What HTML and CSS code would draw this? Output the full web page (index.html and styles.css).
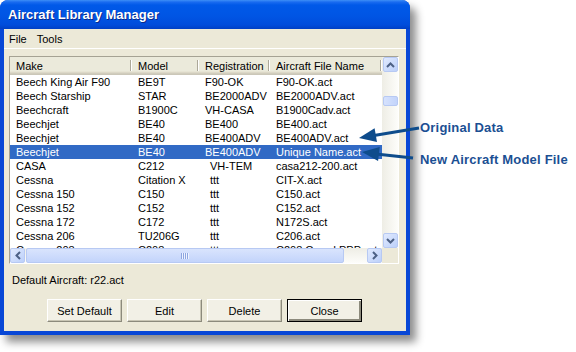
FILE: index.html
```html
<!DOCTYPE html>
<html>
    <head>
        <meta charset="UTF-8">
        <title>Aircraft Library Manager</title>
        <link rel="stylesheet" href="styles.css">
    </head>
    <body>
        <div class="window">
            <div class="titlebar">Aircraft Library Manager</div>
            <div class="client">
                <div class="menubar">
                    <span>File</span>
                    <span>Tools</span>
                </div>
                <div class="listview">
                    <div class="list-area">
                        <table class="aircraft">
                            <colgroup>
                                <col class="c-make">
                                <col class="c-model">
                                <col class="c-reg">
                                <col class="c-file">
                            </colgroup>
                            <thead>
                                <tr><th>Make</th><th>Model</th><th>Registration</th><th>Aircraft File Name</th></tr>
                            </thead>
                            <tbody>
                                <tr><td>Beech King Air F90</td><td>BE9T</td><td>F90-OK</td><td>F90-OK.act</td></tr>
                                <tr><td>Beech Starship</td><td>STAR</td><td>BE2000ADV</td><td>BE2000ADV.act</td></tr>
                                <tr><td>Beechcraft</td><td>B1900C</td><td>VH-CASA</td><td>B1900Cadv.act</td></tr>
                                <tr><td>Beechjet</td><td>BE40</td><td>BE400</td><td>BE400.act</td></tr>
                                <tr><td>Beechjet</td><td>BE40</td><td>BE400ADV</td><td>BE400ADV.act</td></tr>
                                <tr class="sel"><td>Beechjet</td><td>BE40</td><td>BE400ADV</td><td>Unique Name.act</td></tr>
                                <tr><td>CASA</td><td>C212</td><td class="shift">VH-TEM</td><td>casa212-200.act</td></tr>
                                <tr><td>Cessna</td><td>Citation X</td><td class="shift">ttt</td><td>CIT-X.act</td></tr>
                                <tr><td>Cessna 150</td><td>C150</td><td class="shift">ttt</td><td>C150.act</td></tr>
                                <tr><td>Cessna 152</td><td>C152</td><td class="shift">ttt</td><td>C152.act</td></tr>
                                <tr><td>Cessna 172</td><td>C172</td><td class="shift">ttt</td><td>N172S.act</td></tr>
                                <tr><td>Cessna 206</td><td>TU206G</td><td class="shift">ttt</td><td>C206.act</td></tr>
                                <tr><td>Cessna 208</td><td>C208</td><td class="shift">ttt</td><td>C208 Grand PPP.act</td></tr>
                            </tbody>
                        </table>
                    </div>
                    <div class="vscroll">
                        <div class="sbtn">
                            <svg width="9" height="6" viewBox="0 0 9 6"><path d="M1 5 L4.5 1.5 L8 5" fill="none" stroke="#4d6185" stroke-width="2"/></svg>
                        </div>
                        <div class="vthumb"></div>
                        <div class="sbtn push">
                            <svg width="9" height="6" viewBox="0 0 9 6"><path d="M1 1 L4.5 4.5 L8 1" fill="none" stroke="#4d6185" stroke-width="2"/></svg>
                        </div>
                    </div>
                    <div class="hscroll">
                        <div class="sbtn">
                            <svg width="6" height="9" viewBox="0 0 6 9"><path d="M5 1 L1.5 4.5 L5 8" fill="none" stroke="#4d6185" stroke-width="2"/></svg>
                        </div>
                        <div class="hthumb"><span class="grip"></span></div>
                        <div class="sbtn push">
                            <svg width="6" height="9" viewBox="0 0 6 9"><path d="M1 1 L4.5 4.5 L1 8" fill="none" stroke="#4d6185" stroke-width="2"/></svg>
                        </div>
                    </div>
                    <div class="corner"></div>
                </div>
                <div class="status">Default Aircraft: r22.act</div>
                <div class="buttons">
                    <button class="btn">Set Default</button>
                    <button class="btn">Edit</button>
                    <button class="btn">Delete</button>
                    <button class="btn default">Close</button>
                </div>
            </div>
        </div>

        <!-- callout arrows over the dialog -->
        <svg class="arrows" width="576" height="352" viewBox="0 0 576 352">
            <line x1="419" y1="128" x2="374" y2="135.5" stroke="#0e4c8c" stroke-width="3"/>
            <polygon points="359,138 374.6,128.3 377,142.1" fill="#0e4c8c"/>
            <line x1="413" y1="158" x2="376" y2="154" stroke="#0e4c8c" stroke-width="3"/>
            <polygon points="362,152 379.7,147 378.1,161" fill="#0e4c8c"/>
        </svg>
        <div class="note note-orig">Original Data</div>
        <div class="note note-new">New Aircraft Model File</div>
    </body>
</html>
```

FILE: styles.css
```css
body {
    margin: 0;
    width: 576px;
    height: 352px;
    overflow: hidden;
    position: relative;
    background: #fff;
    font-family: "Liberation Sans", Arial, sans-serif;
    font-size: 11px;
    color: #000;
}
.window {
    width: 410px;
    height: 335px;
    display: flex;
    flex-direction: column;
    background: #0847d6;
    border-radius: 8px 8px 0 0;
    box-shadow: 6px 7px 9px rgba(0, 0, 0, 0.45);
}
.titlebar {
    height: 29px;
    flex: none;
    padding-left: 8px;
    line-height: 29px;
    color: #fff;
    font-size: 13px;
    font-weight: bold;
    text-shadow: 1px 1px #0b2a8a;
    border-radius: 8px 8px 0 0;
    background: linear-gradient(to bottom, #3d8ff6 0, #1a6cf0 2px, #0059e8 5px, #0055e4 16px, #004cdb 25px, #003fc4 29px);
}
.client {
    flex: 1;
    margin: 0 4px 4px;
    background: #ece9d8;
    display: flex;
    flex-direction: column;
}
.menubar {
    height: 19px;
    display: flex;
    align-items: center;
    border-bottom: 1px solid #fff;
}
.menubar span {
    padding: 0 5px;
}
.listview {
    margin: 7px 7px 0 5px;
    height: 208px;
    box-sizing: border-box;
    border: 1px solid;
    border-color: #a5a293 #fff #fff #a5a293;
    background: #fff;
    display: grid;
    grid-template-columns: 1fr 16px;
    grid-template-rows: 1fr 15px;
}
.list-area {
    overflow: hidden;
}
.aircraft {
    width: 372px;
    table-layout: fixed;
    border-collapse: collapse;
}
.c-make { width: 122px; }
.c-model { width: 67px; }
.c-reg { width: 71px; }
.c-file { width: 112px; }
.aircraft th {
    position: relative;
    height: 18px;
    padding: 0 0 0 6px;
    text-align: left;
    font-weight: normal;
    white-space: nowrap;
    background: linear-gradient(to bottom, #ebeadb 0, #ebeadb 14px, #e2decd 15px, #d6d2c2 16px, #cbc7b8 17px);
}
.aircraft th::after {
    content: "";
    position: absolute;
    right: 1px;
    top: 3px;
    bottom: 4px;
    width: 1px;
    background: #aca899;
    box-shadow: 1px 0 #fff;
}
.aircraft td {
    height: 14px;
    line-height: 14px;
    padding: 0 0 0 6px;
    white-space: nowrap;
    overflow: hidden;
}
.aircraft td.shift {
    padding-left: 11px;
}
.aircraft tr.sel td {
    background: #316ac5;
    color: #fff;
}
.vscroll {
    display: flex;
    flex-direction: column;
    align-items: center;
    background: linear-gradient(to right, #eeede5, #fdfdfa);
}
.hscroll {
    display: flex;
    align-items: center;
    background: linear-gradient(to bottom, #eeede5, #fdfdfa);
}
.sbtn {
    width: 15px;
    height: 15px;
    flex: none;
    box-sizing: border-box;
    border: 1px solid #b7c9f3;
    border-radius: 2px;
    background: linear-gradient(135deg, #e1eafe, #bcd0fa);
    display: flex;
    align-items: center;
    justify-content: center;
}
.sbtn.push {
    margin-top: auto;
    margin-left: auto;
}
.vscroll .sbtn.push {
    margin-left: 0;
}
.hscroll .sbtn.push {
    margin-top: 0;
}
.vthumb {
    width: 15px;
    height: 10px;
    margin-top: 24px;
    box-sizing: border-box;
    border: 1px solid #b7c9f3;
    border-radius: 2px;
    background: linear-gradient(to right, #d6e2fd, #c3d4fb);
}
.hthumb {
    width: 318px;
    height: 15px;
    margin-left: 1px;
    box-sizing: border-box;
    border: 1px solid #b7c9f3;
    border-radius: 2px;
    background: linear-gradient(to bottom, #d9e4fd, #c3d4fb);
    display: flex;
    align-items: center;
    justify-content: center;
}
.grip {
    width: 8px;
    height: 6px;
    background: repeating-linear-gradient(to right, #8ea6e0 0, #8ea6e0 1px, #eef3ff 1px, #eef3ff 2px);
}
.corner {
    background: #ece9d8;
}
.status {
    margin-top: 9px;
    padding-left: 8px;
    line-height: 14px;
}
.buttons {
    margin-top: 12px;
    padding-left: 43px;
    display: flex;
    gap: 5px;
}
.btn {
    width: 75px;
    height: 23px;
    padding: 0;
    font-family: "Liberation Sans", Arial, sans-serif;
    font-size: 11px;
    color: #000;
    background: #f2f0e6;
    border: 1px solid;
    border-color: #fff #8c8a7c #8c8a7c #fff;
    box-shadow: inset -1px -1px #c9c6b5;
}
.btn.default {
    border: 1px solid #000;
    box-shadow: inset 1px 1px #fff, inset -2px -2px #8c8a7c;
}
.arrows {
    position: absolute;
    left: 0;
    top: 0;
    pointer-events: none;
}
.note {
    position: absolute;
    left: 420px;
    line-height: 16px;
    font-size: 13px;
    font-weight: bold;
    letter-spacing: 0.2px;
    color: #1b4f93;
}
.note-orig {
    top: 120px;
}
.note-new {
    top: 152px;
}
```
